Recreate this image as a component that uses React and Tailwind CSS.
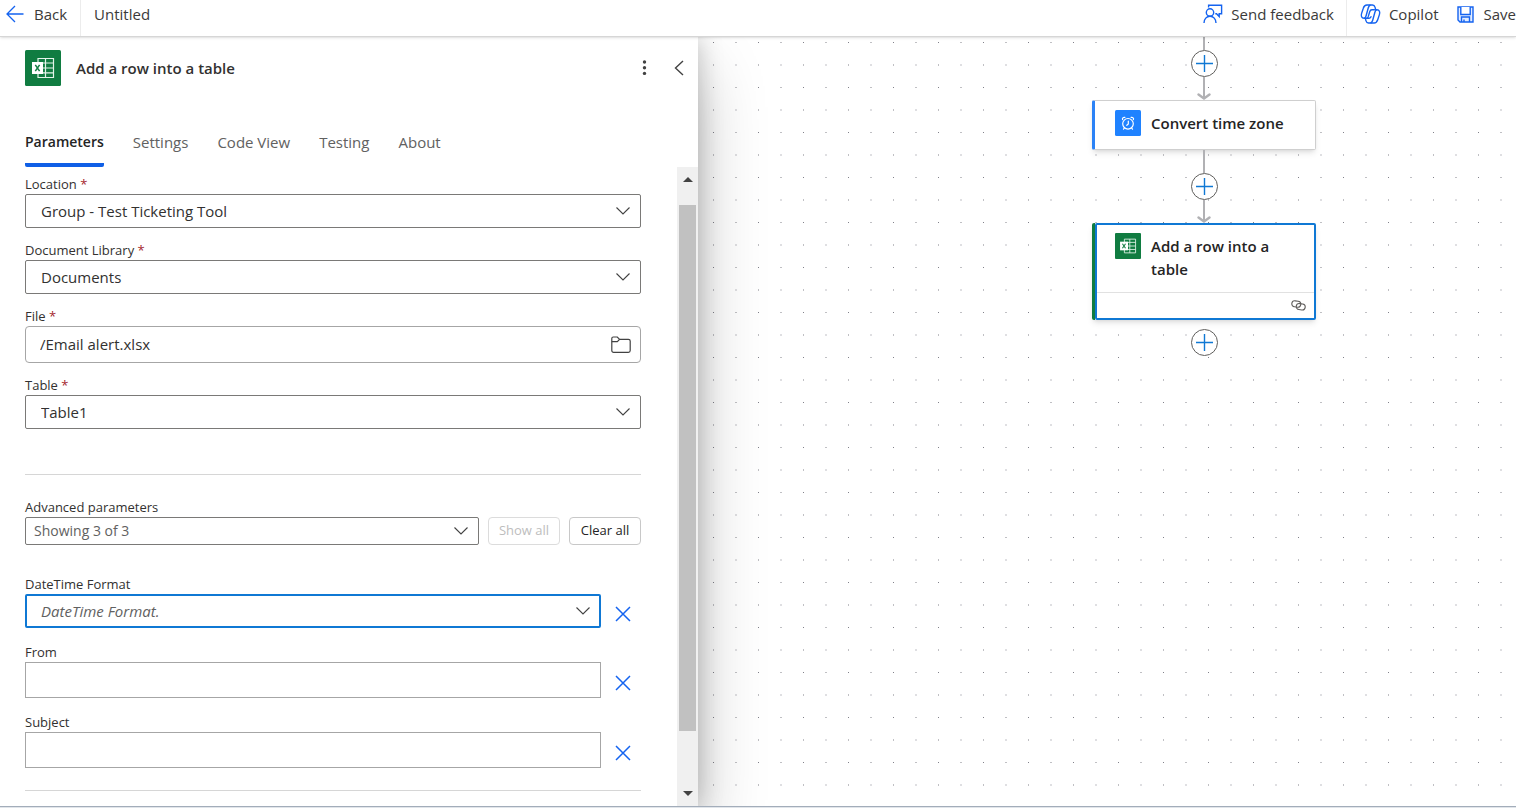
import { useState } from 'react';

const tabs = ['Parameters', 'Settings', 'Code View', 'Testing', 'About'];

const BackIcon = () => (
  <svg width="18" height="18" viewBox="0 0 18 18" fill="none" stroke="#1463f0" strokeWidth="1.3">
    <path d="M17.5 9H1M9 1L1 9l8 8" />
  </svg>
);

const FeedbackIcon = () => (
  <svg width="20" height="20" viewBox="0 0 20 20" fill="none" stroke="#1463f0" strokeWidth="1.4">
    <circle cx="7" cy="8.5" r="3.7" />
    <path d="M1 19c0-4 2.6-6.8 6-6.8s6 2.8 6 6.8" />
    <path d="M5.6 3.6V1.2h13v8.6h-2.4v2.7l-2.7-2.7h-1.2" />
  </svg>
);

const CopilotIcon = () => (
  <svg width="21" height="20" viewBox="0 0 20 20" fill="none" stroke="#1463f0" strokeWidth="1.4" strokeLinejoin="round">
    <path d="M6.4 14.2H3.6C1 14.2.3 12 1.1 9.4l1.7-5.2C3.4 2.2 4.4 1 6.4 1H12c1.6 0 2.2 1 2.6 2.4l.6 2.4" />
    <path d="M13.6 5.8h2.8c2.6 0 3.3 2.2 2.5 4.8l-1.700 5.2c-.6 2-1.6 3.2-3.600 3.200H8c-1.600 0-2.200-1-2.600-2.400l-.6-2.400" />
    <path d="M10 1C8.700 1.400 8.200 2.400 7.800 3.800L5.600 11.800c-.4 1.400-1 2.400-2 2.400" />
    <path d="M10 19c1.300-.4 1.800-1.400 2.200-2.800l2.200-8c.4-1.400 1-2.400 2-2.400" />
    <path d="M13.600 5.800h-2.200c-1.200 0-1.800.8-2.200 2l-1.400 4.600c-.4 1.200-.8 1.800-1.600 1.800h2.400c1.200 0 1.800-.8 2.200-2" />
  </svg>
);

const SaveIcon = () => (
  <svg width="17" height="17" viewBox="0 0 17 17" fill="none" stroke="#1463f0" strokeWidth="1.4">
    <path d="M1 1h15v15H3L1 14z" fill="#e3edff" />
    <path d="M3.800 1v7.500h9.400V1" fill="#fff" />
    <path d="M4.500 16v-5h8v5M7 16v-2.500" />
  </svg>
);

const ExcelIcon = ({ className }) => (
  <svg className={className} viewBox="0 0 36 36">
    <rect width="36" height="36" rx="1.5" fill="#107c41" />
    <path d="M13 8.500h15.500v19H13zM13 13h15.500M13 18h15.500M13 22.800h15.500M20.500 8.500v19" fill="none" stroke="#e3f3e9" strokeWidth="1.2" />
    <rect x="7" y="12" width="11" height="12" fill="#fff" />
    <path d="M10.300 14.800l4.300 6.400M14.600 14.800l-4.300 6.400" stroke="#107c41" strokeWidth="1.5" />
  </svg>
);

const ClockIcon = () => (
  <svg className="h-[26px] w-[26px] shrink-0" viewBox="0 0 26 26">
    <rect width="26" height="26" rx="1.5" fill="#1f82ff" />
    <g fill="none" stroke="#fff" strokeWidth="1.2" strokeLinecap="round">
      <circle cx="13" cy="13.800" r="5.300" />
      <path d="M13.300 11v3l-1.500 1.300M7.600 9.600C7 8.200 8.200 7 9.900 7.400M18.400 9.600c.6-1.400-.6-2.600-2.300-2.200M9.400 18l-.9 1.200M16.600 18l.9 1.200" />
    </g>
  </svg>
);

const Chevron = () => (
  <svg className="pointer-events-none absolute inset-y-0 right-[11px] my-auto" width="14" height="8" viewBox="0 0 14 8" fill="none" stroke="#424242" strokeWidth="1.1">
    <path d="M.5.5L7 7 13.500.5" />
  </svg>
);

const FolderIcon = () => (
  <svg width="20" height="18" viewBox="0 0 20 18" fill="none" stroke="#424242" strokeWidth="1.2">
    <path d="M.8 14.500v-12C.8 1.500 1.500 1 2.300 1h4l2.300 2.300h8.800c1 0 1.800.7 1.800 1.700v9.500c0 1-.8 1.800-1.800 1.800H2.600c-1 0-1.800-.8-1.800-1.800z" />
    <path d="M.8 5.700h5.500l2.300-2.400" />
  </svg>
);

const LinkIcon = () => (
  <svg width="15" height="11" viewBox="0 0 15 11" fill="none" stroke="#605e5c" strokeWidth="1.1">
    <rect x=".8" y="1" width="9" height="6" rx="3" transform="rotate(8 5 4)" />
    <rect x="5.200" y="3.800" width="9" height="6" rx="3" transform="rotate(8 10 7)" />
  </svg>
);

const Field = ({ id, label, required, children }) => (
  <div>
    <label htmlFor={id} className="block text-[13px] leading-5 text-[#323130]">
      {label}
      {required && <span className="text-[#a4262c]"> *</span>}
    </label>
    {children}
  </div>
);

const SelectField = ({ id, label, value }) => (
  <Field id={id} label={label} required>
    <div className="relative">
      <select id={id} className="h-[34px] w-full appearance-none rounded-xs border border-[#7a7977] bg-white pl-[15px] text-[15px] text-[#323130]">
        <option>{value}</option>
      </select>
      <Chevron />
    </div>
  </Field>
);

const RemoveButton = ({ label }) => (
  <button aria-label={label} className="flex w-9 shrink-0 items-center justify-center pt-1.5">
    <svg width="16" height="16" viewBox="0 0 16 16" stroke="#1463f0" strokeWidth="1.5">
      <path d="M1 1l14 14M15 1L1 15" />
    </svg>
  </button>
);

const TextField = ({ id, label }) => (
  <Field id={id} label={label}>
    <div className="flex gap-1">
      <input id={id} type="text" className="h-9 min-w-0 flex-1 border border-[#a6a6a6] bg-white px-3 text-[15px]" />
      <RemoveButton label={`Remove ${label}`} />
    </div>
  </Field>
);

const AddButton = () => (
  <button aria-label="Insert a new step" className="flex h-[27px] w-[27px] shrink-0 items-center justify-center rounded-full border border-[#5f5e5c] bg-white">
    <svg width="17" height="17" viewBox="0 0 17 17" stroke="#0f78d4" strokeWidth="1.4">
      <path d="M8.500 0v17M0 8.500h17" />
    </svg>
  </button>
);

const Arrow = () => (
  <svg className="shrink-0" width="14" height="23" viewBox="0 0 14 23" fill="none" stroke="#b1b1b4" strokeWidth="2">
    <path d="M7 0v21" />
    <path d="M1.500 17.500L7 21.500l5.500-4" strokeWidth="2.4" strokeLinecap="round" strokeLinejoin="round" />
  </svg>
);

const Scrollbar = () => (
  <div className="flex w-[21px] shrink-0 flex-col items-center bg-[#f0f0f0]">
    <svg className="mt-2.5 shrink-0" width="10" height="5" viewBox="0 0 10 5" fill="#424242"><path d="M0 5l5-5 5 5z" /></svg>
    <div className="mt-[23px] mb-[60px] w-[17px] flex-1 bg-[#c1c1c1]" />
    <svg className="mb-2.5 shrink-0" width="10" height="5" viewBox="0 0 10 5" fill="#424242"><path d="M0 0h10L5 5z" /></svg>
  </div>
);

const TopBar = () => (
  <header className="relative z-20 flex h-[37px] shrink-0 items-stretch justify-between overflow-hidden border-b border-[#d6d6d6] bg-white text-[15px] text-[#3b3a39] shadow-sm">
    <div className="flex">
      <button className="flex items-center gap-2.5 border-r border-[#ececec] pr-[13px] pb-2 pl-1.5">
        <BackIcon />
        Back
      </button>
      <span className="flex items-center pb-2 pl-[13px]">Untitled</span>
    </div>
    <div className="flex shrink-0">
      <button className="flex items-center gap-2 border-r border-[#ececec] pr-3 pb-2">
        <FeedbackIcon />
        Send feedback
      </button>
      <button className="flex items-center gap-2 pr-[18px] pb-2 pl-[13px]">
        <CopilotIcon />
        Copilot
      </button>
      <button className="flex items-center gap-2.5 pb-2">
        <SaveIcon />
        Save
      </button>
    </div>
  </header>
);

const ParametersPanel = () => {
  const [activeTab, setActiveTab] = useState('Parameters');

  return (
    <section className="relative z-10 flex min-h-0 flex-col bg-white shadow-[0_32px_64px_rgba(0,0,0,0.24),0_0_24px_rgba(0,0,0,0.22)]">
      {/* Title */}
      <div className="flex h-[62px] shrink-0 items-center pr-3.5 pl-[25px]">
        <ExcelIcon className="h-9 w-9 shrink-0" />
        <h1 className="ml-[15px] flex-1 text-[15px] font-semibold text-[#323130]">Add a row into a table</h1>
        <button aria-label="More options" className="mr-[27px]">
          <svg width="5" height="16" viewBox="0 0 5 16" fill="#424242">
            <circle cx="2.5" cy="2" r="1.700" />
            <circle cx="2.5" cy="7.700" r="1.700" />
            <circle cx="2.5" cy="13.400" r="1.700" />
          </svg>
        </button>
        <button aria-label="Collapse panel">
          <svg width="10" height="16" viewBox="0 0 10 16" fill="none" stroke="#424242" strokeWidth="1.4">
            <path d="M9 1L1.500 8 9 15" />
          </svg>
        </button>
      </div>

      {/* Tabs */}
      <div className="flex h-[68px] shrink-0 items-end gap-[29px] pl-[25px]">
        {tabs.map((tab) => (
          <button
            key={tab}
            onClick={() => setActiveTab(tab)}
            className={`h-9 border-b-4 pb-2.5 leading-5 ${
              tab === activeTab ? 'rounded-xs border-[#0f5fe6] text-sm font-semibold text-[#242424]' : 'border-transparent text-[15px] text-[#616161]'
            }`}
          >
            {tab}
          </button>
        ))}
      </div>

      {/* Form */}
      <div className="flex min-h-0 flex-1">
        <div className="min-w-0 flex-1 overflow-hidden pt-[7px] pr-9 pl-[25px]">
          <div className="flex flex-col gap-3">
            <SelectField id="location" label="Location" value="Group - Test Ticketing Tool" />
            <SelectField id="library" label="Document Library" value="Documents" />
            <Field id="file" label="File" required>
              <div className="flex h-[37px] items-center rounded-sm border border-[#a6a6a6] pr-[9px]">
                <input id="file" type="text" defaultValue="/Email alert.xlsx" className="min-w-0 flex-1 pl-3.5 text-[15px] text-[#323130]" />
                <button aria-label="Browse files">
                  <FolderIcon />
                </button>
              </div>
            </Field>
            <SelectField id="table" label="Table" value="Table1" />
          </div>

          <hr className="mt-[45px] mb-[22px] border-[#d6d6d6]" />

          <label htmlFor="advanced" className="block text-[13px] leading-5 text-[#323130]">Advanced parameters</label>
          <div className="flex gap-[9px]">
            <div className="relative flex-1">
              <select id="advanced" className="h-7 w-full appearance-none rounded-xs border border-[#7a7977] bg-white pl-2 text-sm text-[#616161]">
                <option>Showing 3 of 3</option>
              </select>
              <Chevron />
            </div>
            <button disabled className="h-7 w-[72px] rounded-sm border border-[#dcdcdc] text-[13px] text-[#bdbdbd]">Show all</button>
            <button className="h-7 w-[72px] rounded-sm border border-[#c8c8c8] text-[13px] text-[#242424]">Clear all</button>
          </div>

          <div className="mt-[29px] flex flex-col gap-3.5">
            <Field id="datetime" label="DateTime Format">
              <div className="flex gap-1">
                <div className="relative flex-1">
                  <select id="datetime" className="h-[34px] w-full appearance-none rounded-xs border-2 border-[#0f78d4] bg-white pl-3.5 text-[15px] text-[#616161] italic">
                    <option>DateTime Format.</option>
                  </select>
                  <Chevron />
                </div>
                <RemoveButton label="Remove DateTime Format" />
              </div>
            </Field>
            <TextField id="from" label="From" />
            <TextField id="subject" label="Subject" />
          </div>

          <hr className="mt-[22px] border-[#d6d6d6]" />
        </div>
        <Scrollbar />
      </div>
    </section>
  );
};

const Canvas = () => (
  <main className="relative overflow-hidden bg-white">
    <svg className="absolute inset-0 h-full w-full" aria-hidden="true">
      <defs>
        <pattern id="dots" width="45" height="45" patternUnits="userSpaceOnUse" fill="#81818a">
          <rect x="15" y="5" width="1" height="1" />
          <rect x="37" y="5" width="2" height="1" opacity=".5" />
          <rect x="15" y="27" width="1" height="2" opacity=".5" />
          <rect x="37" y="27" width="2" height="2" opacity=".25" />
        </pattern>
      </defs>
      <rect width="100%" height="100%" fill="url(#dots)" />
    </svg>

    <div className="absolute top-0 left-[394px] flex w-[224px] flex-col items-center">
      <div className="h-[13px] w-0.5 bg-[#b1b1b4]" />
      <AddButton />
      <Arrow />
      <div className="flex h-[50px] w-full rounded-xs border border-l-3 border-[#cfcfcf] border-l-[#2b82f6] bg-white pt-[9px] pl-5 shadow-md">
        <ClockIcon />
        <span className="mt-0.5 ml-2.5 text-[15px] leading-[23px] font-semibold text-[#242424]">Convert time zone</span>
      </div>
      <div className="h-[23px] w-0.5 bg-[#b1b1b4]" />
      <AddButton />
      <Arrow />
      <div className="w-full rounded-xs border-l-3 border-[#107c41] bg-white shadow-md">
        <div className="rounded-xs border-2 border-[#0f78d4]">
          <div className="flex h-[67px] pt-2 pl-[18px]">
            <ExcelIcon className="h-[26px] w-[26px] shrink-0" />
            <span className="mt-0.5 ml-2.5 w-32 text-[15px] leading-[23px] font-semibold text-[#242424]">Add a row into a table</span>
          </div>
          <div className="flex h-[26px] items-center justify-end border-t border-[#e1e1e1] pr-2">
            <LinkIcon />
          </div>
        </div>
      </div>
      <div className="mt-[9px]">
        <AddButton />
      </div>
    </div>
  </main>
);

const App = () => (
  <div className="flex h-screen flex-col overflow-hidden bg-[#e1e5ea] pb-px font-['Open_Sans',sans-serif]">
    <TopBar />
    <div className="grid min-h-0 flex-1 grid-cols-[349fr_409fr] grid-rows-1 overflow-hidden border-b border-[#a3adba]">
      <ParametersPanel />
      <Canvas />
    </div>
  </div>
);

export default App;
